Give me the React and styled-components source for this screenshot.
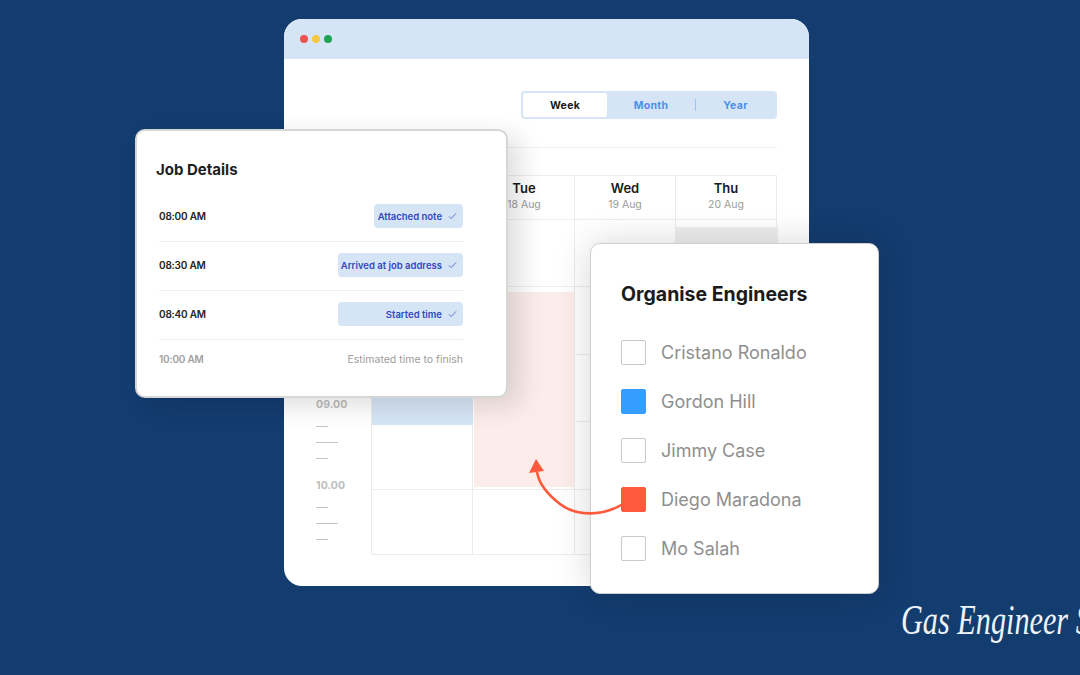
import React from 'react'
import styled, { createGlobalStyle } from 'styled-components'

const GlobalStyle = createGlobalStyle`
  html, body { margin: 0; padding: 0; background: #133c6f; }
  * { box-sizing: border-box; }
`

const days = [
  ['', ''],
  ['Tue', '18 Aug'],
  ['Wed', '19 Aug'],
  ['Thu', '20 Aug'],
]
const hours = ['09.00', '10.00']
const jobs = [
  { time: '08:00 AM', label: 'Attached note' },
  { time: '08:30 AM', label: 'Arrived at job address', wide: true },
  { time: '08:40 AM', label: 'Started time', wide: true },
]
const engineers = [
  { name: 'Cristano Ronaldo' },
  { name: 'Gordon Hill', color: '#349dff' },
  { name: 'Jimmy Case' },
  { name: 'Diego Maradona', color: '#ff5a3c' },
  { name: 'Mo Salah' },
]

export default function App() {
  return (
    <Stage>
      <GlobalStyle />
      <Window>
        <TitleBar>
          <Dot $color="#ef5350" />
          <Dot $color="#f5c842" />
          <Dot $color="#1fa456" />
        </TitleBar>
        <Content>
          <Toolbar>
            <Toggle>
              <ToggleItem $active>Week</ToggleItem>
              <ToggleItem>Month</ToggleItem>
              <ToggleSep />
              <ToggleItem>Year</ToggleItem>
            </Toggle>
          </Toolbar>
          <Rule />
          <Calendar>
            <TimeColumn>
              {hours.map((h) => (
                <HourBlock key={h}>
                  <HourLabel>{h}</HourLabel>
                  <Dash />
                  <Dash $long />
                  <Dash />
                </HourBlock>
              ))}
            </TimeColumn>
            <Sheet>
              <HeadRow>
                {days.map(([d, date], i) => (
                  <HeadCell key={i}>
                    <DayName>{d}</DayName>
                    <DayDate>{date}</DayDate>
                  </HeadCell>
                ))}
              </HeadRow>
              <BodyGrid>
                {Array.from({ length: 20 }).map((_, i) => (
                  <BodyCell key={i} />
                ))}
                <BlueEvent />
                <PinkEvent />
                <GreyEvent />
              </BodyGrid>
            </Sheet>
          </Calendar>
        </Content>
      </Window>

      <JobCard>
        <JobTitle>Job Details</JobTitle>
        <JobList>
          {jobs.map((j) => (
            <JobRow key={j.time}>
              <JobTime>{j.time}</JobTime>
              <Badge $wide={j.wide}>
                {j.label}
                <svg width="9" height="8" viewBox="0 0 9 8" fill="none">
                  <path d="M1 4.4 L3.2 6.6 L8 1.4" stroke="#5468c8" strokeWidth="0.9" />
                </svg>
              </Badge>
            </JobRow>
          ))}
          <JobRow $last>
            <JobTime $muted>10:00 AM</JobTime>
            <Estimate>Estimated time to finish</Estimate>
          </JobRow>
        </JobList>
      </JobCard>

      <EngineerCard>
        <EngineerTitle>Organise Engineers</EngineerTitle>
        {engineers.map((e) => (
          <EngineerRow key={e.name}>
            <Check $color={e.color} />
            <EngineerName>{e.name}</EngineerName>
          </EngineerRow>
        ))}
      </EngineerCard>

      <Arrow width="100" height="70" viewBox="0 0 100 70" fill="none">
        <path d="M96 45 C76 57 50 58 33 45 C20 35 12 25 10 13" stroke="#ff5a3c" strokeWidth="2.6" />
        <path d="M9 0 L2 14 L17 12 Z" fill="#ff5a3c" />
      </Arrow>

      <Wordmark>Gas Engineer Software</Wordmark>
    </Stage>
  )
}

const Stage = styled.div`
  position: relative;
  width: 1080px;
  height: 675px;
  overflow: hidden;
  padding: 19px 0 0 284px;
  background: #133c6f;
  font-family: Inter, "Noto Sans", sans-serif;
`
const Window = styled.div`
  width: 525px;
  height: 567px;
  background: #fff;
  border-radius: 18px;
  overflow: hidden;
`
const TitleBar = styled.div`
  height: 40px;
  background: #d6e5f6;
  display: flex;
  align-items: center;
  gap: 4px;
  padding-left: 16px;
`
const Dot = styled.span`
  width: 8px;
  height: 8px;
  border-radius: 50%;
  background: ${(p) => p.$color};
`
const Content = styled.div`
  padding: 32px 32px 0;
`
const Toolbar = styled.div`
  display: flex;
  justify-content: flex-end;
`
const Toggle = styled.div`
  width: 256px;
  height: 28px;
  padding: 2px;
  background: #d6e5f6;
  border-radius: 4px;
  display: grid;
  grid-template-columns: 84px 88px 1px 79px;
  align-items: center;
`
const ToggleItem = styled.div`
  height: 24px;
  line-height: 25px;
  text-align: center;
  font-size: 10.5px;
  font-weight: 700;
  letter-spacing: 0.3px;
  border-radius: 2px;
  color: ${(p) => (p.$active ? '#1b1b1b' : '#4a90e8')};
  background: ${(p) => (p.$active ? '#fff' : 'transparent')};
`
const ToggleSep = styled.span`
  width: 1px;
  height: 12px;
  background: #9cc2ee;
`
const Rule = styled.div`
  height: 1px;
  background: #eeeeee;
  margin: 28px 0 27px;
`
const Calendar = styled.div`
  display: flex;
`
const TimeColumn = styled.div`
  width: 55px;
  padding-top: 223px;
`
const HourBlock = styled.div`
  height: 81px;
`
const HourLabel = styled.div`
  font-size: 10.5px;
  line-height: 14px;
  font-weight: 700;
  letter-spacing: 0.1px;
  color: #bdbdbd;
  margin-bottom: 14px;
`
const Dash = styled.div`
  width: ${(p) => (p.$long ? '22px' : '12px')};
  height: 1px;
  background: #c4c4c4;
  margin-bottom: 15px;
`
const Sheet = styled.div`
  width: 406px;
`
const HeadRow = styled.div`
  display: grid;
  grid-template-columns: repeat(4, 1fr);
  height: 45px;
  border: 1px solid #ececec;
`
const HeadCell = styled.div`
  display: flex;
  flex-direction: column;
  align-items: center;
  padding-top: 4px;
  border-left: 1px solid #ececec;
  &:first-child { border-left: none; }
`
const DayName = styled.div`
  font-size: 13px;
  line-height: 17px;
  min-height: 17px;
  font-weight: 600;
  color: #1b1b1b;
`
const DayDate = styled.div`
  font-size: 10.5px;
  line-height: 15px;
  color: #9a9a9a;
`
const BodyGrid = styled.div`
  position: relative;
  display: grid;
  grid-template-columns: repeat(4, 1fr);
  grid-template-rows: 67px 68px 67px 68px 64px;
  border-left: 1px solid #ececec;
  border-bottom: 1px solid #ececec;
`
const BodyCell = styled.div`
  border-right: 1px solid #ececec;
  border-bottom: 1.5px solid #ececec;
  &:nth-last-child(-n + 7) { border-bottom: none; }
`
const BlueEvent = styled.div`
  position: absolute;
  left: 0;
  top: 67px;
  width: 101px;
  height: 138px;
  background: #d6e5f6;
`
const PinkEvent = styled.div`
  position: absolute;
  left: 102px;
  top: 72px;
  width: 100px;
  height: 195px;
  background: #fcedea;
`
const GreyEvent = styled.div`
  position: absolute;
  left: 304px;
  top: 7px;
  width: 102px;
  height: 60px;
  background: #eeeeee;
`
const JobCard = styled.div`
  position: absolute;
  left: 135px;
  top: 129px;
  width: 373px;
  height: 269px;
  background: #fff;
  border: 2px solid #d6d6d6;
  border-radius: 10px;
  box-shadow: 12px 8px 26px rgba(0, 0, 0, 0.13);
  padding: 29px 43px 0 22px;
`
const JobTitle = styled.div`
  font-size: 15px;
  line-height: 20px;
  font-weight: 700;
  color: #1f1f1f;
  margin-left: -3px;
`
const JobList = styled.div`
  margin-top: 13px;
`
const JobRow = styled.div`
  display: flex;
  justify-content: space-between;
  align-items: center;
  height: ${(p) => (p.$last ? '40px' : '49px')};
  padding-bottom: 2px;
  border-bottom: ${(p) => (p.$last ? 'none' : '1px solid #eeeeee')};
`
const JobTime = styled.div`
  font-size: 10px;
  font-weight: 600;
  letter-spacing: -0.2px;
  color: ${(p) => (p.$muted ? '#a0a0a0' : '#222')};
`
const Badge = styled.div`
  display: flex;
  align-items: center;
  justify-content: flex-end;
  gap: 6px;
  width: ${(p) => (p.$wide ? '125px' : '89px')};
  height: 24px;
  padding-right: 6px;
  background: #d6e5f6;
  border-radius: 4px;
  font-size: 9.5px;
  font-weight: 600;
  color: #3247c0;
  white-space: nowrap;
`
const Estimate = styled.div`
  font-size: 10.5px;
  color: #9c9c9c;
`
const EngineerCard = styled.div`
  position: absolute;
  left: 590px;
  top: 243px;
  width: 289px;
  height: 351px;
  background: #fff;
  border: 1px solid #cfcfcf;
  border-radius: 10px;
  box-shadow: 0 0 36px rgba(0, 0, 0, 0.16);
  padding: 37px 0 0 30px;
`
const EngineerTitle = styled.div`
  font-size: 19.5px;
  line-height: 26px;
  font-weight: 700;
  color: #1b1b1b;
  margin-bottom: 21px;
`
const EngineerRow = styled.div`
  display: flex;
  align-items: center;
  gap: 15px;
  height: 49px;
`
const Check = styled.span`
  width: 25px;
  height: 25px;
  border-radius: 2px;
  background: ${(p) => p.$color || '#fff'};
  border: 1.5px solid ${(p) => p.$color || '#c8c8c8'};
`
const EngineerName = styled.div`
  font-size: 18px;
  line-height: 24px;
  color: #8f8f8f;
`
const Arrow = styled.svg`
  position: absolute;
  left: 527px;
  top: 459px;
`
const Wordmark = styled.div`
  position: absolute;
  left: 901px;
  top: 598px;
  font-family: "Liberation Serif", serif;
  font-style: italic;
  font-size: 36px;
  line-height: 44px;
  color: #eef3f9;
  white-space: nowrap;
  transform: scale(0.84, 1.15);
  transform-origin: left center;
`
